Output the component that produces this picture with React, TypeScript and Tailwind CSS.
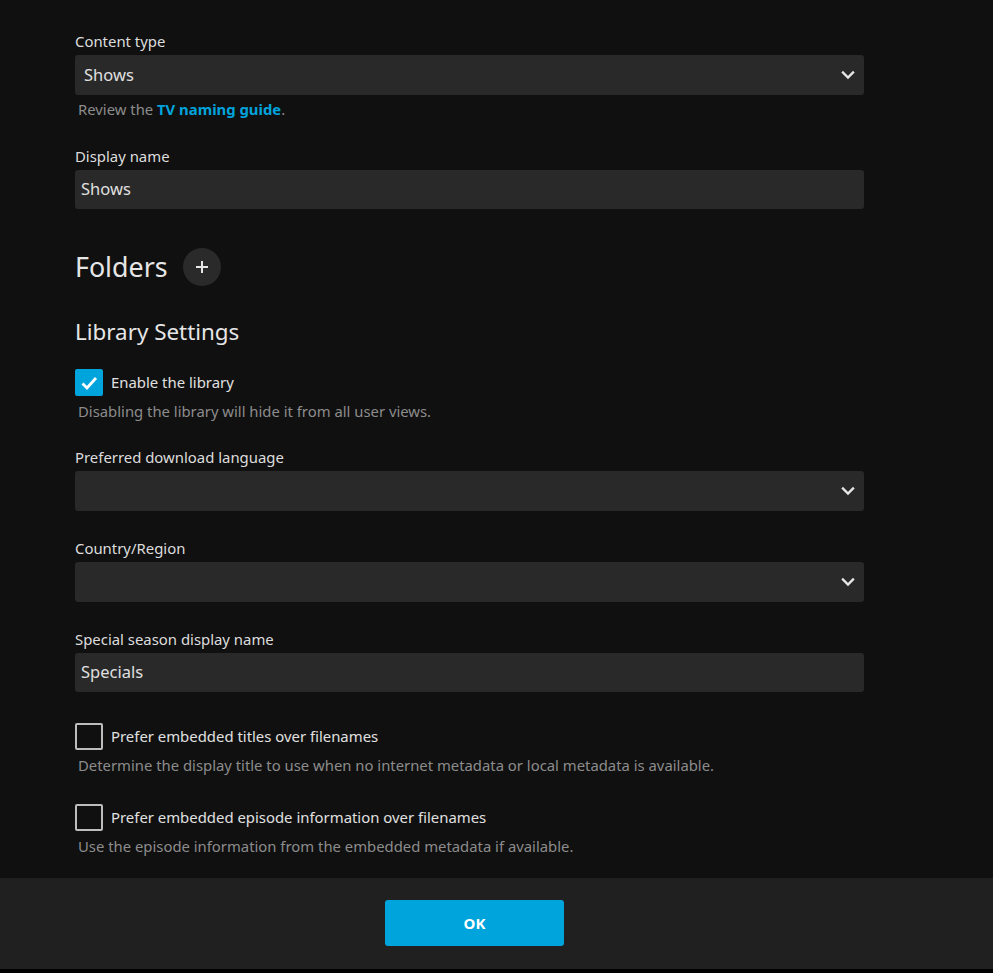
import { useState } from 'react';

const Chevron = () => (
    <svg width="14" height="14" viewBox="0 0 14 14" className="shrink-0">
        <polyline points="2,4.5 7,9.5 12,4.5" fill="none" stroke="#e6e6e6" strokeWidth="2.4" strokeLinecap="square" />
    </svg>
);

function SelectField({ label, value, top }: { label: string; value?: string; top: string }) {
    return (
        <div className={top}>
            <div className="text-[14.9px] leading-4 text-[#dddddd]">{label}</div>
            <div className="mt-[6px] h-10 rounded-[3px] bg-[#292929] flex items-center justify-between pl-[9px] pr-[9px]">
                <span className="text-[16.5px] text-[#e0e0e0]">{value}</span>
                <Chevron />
            </div>
        </div>
    );
}

function TextField({ label, value, top }: { label: string; value: string; top: string }) {
    return (
        <div className={top}>
            <div className="text-[14.9px] leading-4 text-[#dddddd]">{label}</div>
            <div className="mt-[6px] h-[39px] rounded-[3px] bg-[#292929] flex items-center px-[6px]">
                <span className="text-[16.5px] text-[#e0e0e0]">{value}</span>
            </div>
        </div>
    );
}

function Check({ label, desc, checked, onToggle, top }: { label: string; desc: string; checked: boolean; onToggle: () => void; top: string }) {
    return (
        <div className={top}>
            <label className="flex items-center gap-2 cursor-pointer" onClick={onToggle}>
                {checked ? (
                    <span className="w-[28px] h-[27px] rounded-[2px] bg-[#00a4dc] flex items-center justify-center">
                        <svg width="20" height="20" viewBox="0 0 20 20">
                            <polyline points="3.5,10.5 8,15 17,5" fill="none" stroke="#ffffff" strokeWidth="2.8" />
                        </svg>
                    </span>
                ) : (
                    <span className="w-[28px] h-[27px] rounded-[2px] border-2 border-[#bdbdbd]" />
                )}
                <span className="text-[14.9px] text-[#e0e0e0]">{label}</span>
            </label>
            <div className="mt-[6px] pl-[3px] text-[14.85px] leading-[18px] text-[#8c8c8c]">{desc}</div>
        </div>
    );
}

export default function App() {
    const [enabled, setEnabled] = useState(true);
    const [titles, setTitles] = useState(false);
    const [episodes, setEpisodes] = useState(false);

    return (
        <div className="h-[973px] bg-black flex flex-col" style={{ fontFamily: '"Noto Sans", "Open Sans", sans-serif' }}>
            <div className="flex-1 bg-[#101010] overflow-hidden">
                <div className="ml-[75px] w-[789px] pt-[33px]">
                    <SelectField label="Content type" value="Shows" top="" />
                    <div className="mt-[5px] pl-[3px] text-[14.85px] leading-[18px] text-[#8c8c8c]">
                        Review the <a className="font-bold text-[#00a4dc]">TV naming guide</a>.
                    </div>

                    <TextField label="Display name" value="Shows" top="mt-[30px]" />

                    <div className="mt-[39px] flex items-center gap-[15px]">
                        <h2 className="text-[26.8px] leading-[34px] text-[#e6e6e6]">Folders</h2>
                        <button className="w-[38px] h-[38px] rounded-full bg-[#2a2a2a] flex items-center justify-center">
                            <svg width="14" height="14" viewBox="0 0 14 14">
                                <path d="M7 1v12M1 7h12" stroke="#e6e6e6" strokeWidth="2" />
                            </svg>
                        </button>
                    </div>

                    <h2 className="mt-[31px] text-[22.4px] leading-[30px] text-[#e6e6e6]">Library Settings</h2>

                    <Check top="mt-[22px]" label="Enable the library" desc="Disabling the library will hide it from all user views." checked={enabled} onToggle={() => setEnabled(!enabled)} />

                    <SelectField label="Preferred download language" top="mt-[29px]" />
                    <SelectField label="Country/Region" top="mt-[29px]" />
                    <TextField label="Special season display name" value="Specials" top="mt-[29px]" />

                    <Check top="mt-[31px]" label="Prefer embedded titles over filenames" desc="Determine the display title to use when no internet metadata or local metadata is available." checked={titles} onToggle={() => setTitles(!titles)} />
                    <Check top="mt-[30px]" label="Prefer embedded episode information over filenames" desc="Use the episode information from the embedded metadata if available." checked={episodes} onToggle={() => setEpisodes(!episodes)} />
                </div>
            </div>
            <div className="h-[91px] shrink-0 bg-[#202020] flex justify-center items-start pt-[22px]">
                <button className="ml-[-44px] w-[179px] h-[46px] rounded-[3px] bg-[#00a4dc] text-white font-bold text-[15px]">OK</button>
            </div>
            <div className="h-[4px] shrink-0 bg-black" />
        </div>
    );
}
